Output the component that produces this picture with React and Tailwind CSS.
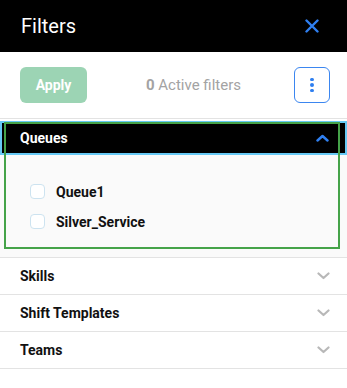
const ChevronDown = ({ className }) => (
  <svg width="13" height="8" viewBox="0 0 13 8" className={className} fill="none">
    <path d="M1.5 1.5 L6.5 6 L11.5 1.5" stroke="currentColor" strokeWidth="2.2" strokeLinecap="round" strokeLinejoin="round" />
  </svg>
);

const ChevronUp = ({ className }) => (
  <svg width="13" height="8" viewBox="0 0 13 8" className={className} fill="none">
    <path d="M1.5 6.5 L6.5 2 L11.5 6.5" stroke="currentColor" strokeWidth="2.4" strokeLinecap="round" strokeLinejoin="round" />
  </svg>
);

const sections = ["Skills", "Shift Templates", "Teams"];
const queues = ["Queue1", "Silver_Service"];

export default function App() {
  return (
    <div className="relative w-[347px] h-[388px] bg-white font-['Roboto',sans-serif] overflow-hidden">
      {/* header */}
      <div className="h-[52px] bg-black flex items-center justify-between pl-[21px] pr-[28px]">
        <span className="text-white text-[20px] leading-none">Filters</span>
        <svg width="14" height="14" viewBox="0 0 14 14" fill="none" className="text-[#2f7ff0]">
          <path d="M1.5 1.5 L12.5 12.5 M12.5 1.5 L1.5 12.5" stroke="currentColor" strokeWidth="2.4" strokeLinecap="round" />
        </svg>
      </div>

      {/* toolbar */}
      <div className="h-[67px] border-b border-[#e3e3e3] flex items-center justify-between pl-5 pr-[17px]">
        <button className="w-[67px] h-9 rounded-md bg-[#9cd4b4] text-white text-sm font-bold">
          Apply
        </button>
        <span className="text-[#a3a3a3] text-[15px] ml-[6px]">
          <span className="font-bold">0</span> Active filters
        </span>
        <button className="w-9 h-9 rounded-md border border-[#3b86f0] flex flex-col items-center justify-center gap-[2px]">
          <span className="w-[3.5px] h-[3.5px] rounded-full bg-[#2f7ff0]"></span>
          <span className="w-[3.5px] h-[3.5px] rounded-full bg-[#2f7ff0]"></span>
          <span className="w-[3.5px] h-[3.5px] rounded-full bg-[#2f7ff0]"></span>
        </button>
      </div>

      {/* queues (open) */}
      <div className="mt-[2px]">
        <div className="h-[34px] bg-black border-2 border-[#66c9f5] flex items-center justify-between pl-[18px] pr-[16px]">
          <span className="text-white text-sm font-bold">Queues</span>
          <ChevronUp className="text-[#2f7ff0]" />
        </div>
        <div className="bg-[#fafafa] border-b border-[#e3e3e3] pt-[29px] pb-[28px] pl-[30px] flex flex-col gap-[15px]">
          {queues.map((q) => (
            <label key={q} className="h-[15px] flex items-center gap-[11px]">
              <span className="w-[15px] h-[15px] rounded-[4px] border border-[#cde3f0] bg-white"></span>
              <span className="text-sm font-bold text-[#111]">{q}</span>
            </label>
          ))}
        </div>
      </div>

      {/* other sections */}
      {sections.map((s) => (
        <div key={s} className="h-[37px] border-b border-[#e3e3e3] flex items-center justify-between pl-5 pr-[17px]">
          <span className="text-sm font-bold text-[#111]">{s}</span>
          <ChevronDown className="text-[#b8b8b8]" />
        </div>
      ))}

      {/* focus outline over the queues panel */}
      <div className="absolute left-[4px] top-[122px] w-[336px] h-[127px] border-[2.5px] border-[#45a349] pointer-events-none"></div>
    </div>
  );
}
